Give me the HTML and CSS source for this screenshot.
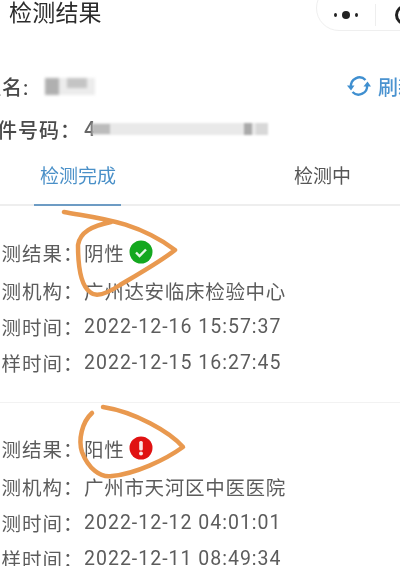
FILE: index.html
```html
<!DOCTYPE html>
<html lang="zh-CN">
<head>
	<meta charset="utf-8">
	<title>检测结果</title>
	<link rel="stylesheet" href="styles.css">
</head>
<body>
<div class="page">
	<header class="nav">
		<h1 class="nav-title">检测结果</h1>
		<div class="capsule">
			<span class="capsule-dots"><i></i><i class="big"></i><i></i></span>
			<span class="capsule-line"></span>
			<span class="capsule-ring"></span>
		</div>
	</header>

	<div class="info">
		<div class="info-row">
			<span class="info-name">姓名:</span>
			<span class="smudge-name"><i></i><i></i></span>
			<a class="refresh">
				<svg width="26" height="24" viewBox="0 0 26 24" fill="none" stroke="#3f8fd0" stroke-width="2.4">
					<path d="M5 13a8.500 8.500 0 0 1 14.500-7"/>
					<path d="M21 11a8.500 8.500 0 0 1-14.500 7"/>
					<path d="M1 11.500h7.500L5 16.500z" fill="#3f8fd0" stroke="none"/>
					<path d="M17.500 12.500H25L21.500 7.500z" fill="#3f8fd0" stroke="none"/>
				</svg>
				<span>刷新</span>
			</a>
		</div>
		<div class="info-row info-row-id">
			<span class="info-id">证件号码：</span>
			<span class="id-value">4</span>
			<span class="smudge-id"><i></i><i></i><i></i></span>
		</div>
	</div>

	<nav class="tabs">
		<a class="tab tab-on">检测完成</a>
		<a class="tab">检测中</a>
	</nav>

	<section class="record">
		<div class="row row-result"><span class="label">检测结果：</span><span class="value">阴性</span>
			<svg class="mark" width="24" height="24" viewBox="0 0 24 24"><circle cx="12" cy="12" r="11.500" fill="#14a81f"/><path d="M7 12.500l3.500 3.500 6.500-6.500" fill="none" stroke="#e6f7e6" stroke-width="2.400"/></svg>
		</div>
		<div class="row"><span class="label">检测机构：</span><span class="value">广州达安临床检验中心</span></div>
		<div class="row"><span class="label">检测时间：</span><span class="value time">2022-12-16 15:57:37</span></div>
		<div class="row"><span class="label">采样时间：</span><span class="value time">2022-12-15 16:27:45</span></div>
	</section>

	<section class="record record-next">
		<div class="row row-result"><span class="label">检测结果：</span><span class="value">阳性</span>
			<svg class="mark" width="24" height="24" viewBox="0 0 24 24"><circle cx="12" cy="12" r="11.500" fill="#e01212"/><rect x="10.200" y="5" width="3.600" height="9.500" rx="1.500" fill="#fbe6e6"/><circle cx="12" cy="17.500" r="2" fill="#fbe6e6"/></svg>
		</div>
		<div class="row"><span class="label">检测机构：</span><span class="value">广州市天河区中医医院</span></div>
		<div class="row"><span class="label">检测时间：</span><span class="value time">2022-12-12 04:01:01</span></div>
		<div class="row"><span class="label">采样时间：</span><span class="value time">2022-12-11 08:49:34</span></div>
	</section>

	<!-- hand drawn circles on top of the photo -->
	<svg class="scribble" width="400" height="566" viewBox="0 0 400 566" fill="none" stroke="#e9994f" stroke-width="4.500" stroke-linecap="round" stroke-linejoin="round">
		<path d="M64 212C95 218 135 220 175 250C160 262 135 276 120 285C105 295 95 297 90 292C80 285 78 262 78 245C80 232 92 226 111 222"/>
		<path d="M92 413C82 422 78 440 82 452C88 468 100 478 112 476C135 474 165 460 183 447C170 432 135 412 103 407"/>
	</svg>
</div>
</body>
</html>
```

FILE: styles.css
```css
html, body {
	margin: 0;
	background: #fff;
}
.page {
	position: relative;
	width: 400px;
	height: 566px;
	overflow: hidden;
	background: #fff;
	font-family: Roboto, "Noto Sans CJK SC", sans-serif;
	color: #5c5c5c;
	filter: blur(.45px);
}
.nav {
	display: flex;
	justify-content: space-between;
	height: 72px;
}
.nav-title {
	margin: 0 0 0 9px;
	font-size: 23px;
	line-height: 28px;
	font-weight: 400;
	letter-spacing: .2px;
	color: #2b2b2b;
}
.capsule {
	display: flex;
	align-items: center;
	flex: none;
	box-sizing: border-box;
	width: 110px;
	height: 46px;
	margin: -15px -26px 0 0;
	padding: 14px 0 0 17px;
	border: 1px solid #efefef;
	border-radius: 23px;
}
.capsule-dots {
	display: flex;
	align-items: center;
	gap: 5px;
	width: 24px;
}
.capsule-dots i {
	width: 4px;
	height: 4px;
	border-radius: 50%;
	background: #222;
}
.capsule-dots i.big {
	flex: none;
	width: 8px;
	height: 8px;
}
.capsule-line {
	width: 1px;
	height: 22px;
	margin-left: 17px;
	background: #eee;
}
.capsule-ring {
	flex: none;
	width: 20px;
	height: 20px;
	margin-left: 19px;
	box-sizing: border-box;
	border: 3px solid #222;
	border-radius: 50%;
}
.info {
	display: flex;
	flex-direction: column;
	gap: 15px;
	margin-left: -19px;
}
.info-row {
	display: flex;
	align-items: center;
	height: 28px;
	font-size: 20px;
	font-weight: 500;
	color: #4a4a4a;
}
.info-name {
	width: 64px;
	letter-spacing: 1px;
}
.smudge-name {
	display: flex;
	width: 50px;
	height: 17px;
	background: #ececec;
	filter: blur(1.5px);
}
.smudge-name i {
	width: 14px;
	height: 17px;
	background: #b0b0b0;
}
.smudge-name i + i {
	width: 20px;
	height: 10px;
	margin-left: 8px;
	background: #c4c4c4;
}
.refresh {
	display: flex;
	align-items: center;
	gap: 6px;
	margin-left: auto;
	margin-right: -18px;
	color: #4a93d0;
	white-space: nowrap;
}
.info-row-id {
	margin-left: -5px;
}
.info-id {
	flex: none;
	width: 108px;
	letter-spacing: 1px;
}
.id-value {
	width: 8px;
	color: #666;
}
.smudge-id {
	display: flex;
	justify-content: space-between;
	align-items: center;
	width: 176px;
	height: 12px;
	background: #e9e9e9;
	filter: blur(1px);
}
.smudge-id i {
	width: 18px;
	height: 10px;
	background: #bcbcbc;
}
.smudge-id i + i {
	width: 8px;
	height: 12px;
	margin-left: 130px;
	background: #aaa;
}
.smudge-id i + i + i {
	width: 12px;
	margin-left: 0;
	background: #d8d8d8;
}
.tabs {
	display: flex;
	height: 40px;
	margin-top: 21px;
	border-bottom: 2px solid #eee;
	font-size: 19px;
	line-height: 26px;
}
.tab {
	flex: none;
	box-sizing: border-box;
	width: 87px;
	height: 40px;
	margin: 0 0 -2px 34px;
	padding-left: 6px;
	color: #555;
	white-space: nowrap;
}
.tab + .tab {
	margin-left: 173px;
	padding-left: 0;
}
.tab-on {
	height: 42px;
	border-bottom: 2px solid #6d9cc4;
	color: #4a90c8;
}
.record {
	display: flex;
	flex-direction: column;
	padding: 26px 0 0 0;
	margin-left: -19px;
	height: 196px;
	box-sizing: border-box;
}
.record-next {
	border-top: 1px solid #f2f2f2;
	padding-top: 25px;
	height: 200px;
}
.row {
	display: flex;
	flex: none;
	align-items: center;
	height: 36px;
	font-size: 19.5px;
	white-space: nowrap;
}
.row-result {
	height: 40px;
}
.label {
	flex: none;
	width: 103px;
	letter-spacing: 1px;
}
.value {
	letter-spacing: .7px;
}
.value.time {
	letter-spacing: 1px;
}
.mark {
	margin-left: 5px;
}
.scribble {
	position: absolute;
	left: 0;
	top: 0;
}
```
